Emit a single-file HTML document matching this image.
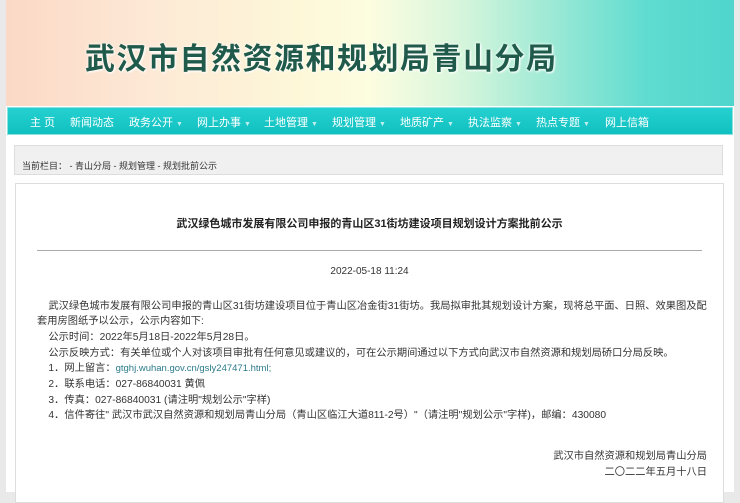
<!DOCTYPE html>
<html><head><meta charset="utf-8"><style>
*{margin:0;padding:0;box-sizing:border-box}
body{width:740px;height:492px;overflow:hidden;background:#e9e9e9;font-family:"Liberation Sans","Noto Sans CJK SC",sans-serif;position:relative}
.wrap{position:absolute;left:6px;top:0;width:728px;height:492px;background:#fff}
.banner{position:absolute;left:0;top:0;width:728px;height:106px;background:linear-gradient(90deg,#fbd9c6 0%,#fde9d6 20%,#fdf7d8 40%,#fdfde0 50%,#d8f6dc 62%,#9ce9d5 75%,#5fdcd0 88%,#4fd5cc 100%)}
.banner h1{position:absolute;left:79px;top:34px;font-size:30px;font-weight:bold;color:#1f5a4a;letter-spacing:1.5px;text-shadow:1px 1px 2px #fff,0 0 3px #fff}
.nav{position:absolute;left:1px;top:107px;width:726px;height:28px;background:linear-gradient(#25d1d0,#10c0c0);border:1px solid #8de0e0}
.nav span{position:absolute;top:6px;font-size:11px;color:#fff;white-space:nowrap}
.nav i{font-style:normal;font-size:7px;color:#bfeeee;margin-left:3px}
.bc{position:absolute;left:8px;top:145px;width:709px;height:30px;background:#f0f0f0;border:1px solid #ddd;font-size:9px;color:#333;padding:13px 0 0 7px}
.box{position:absolute;left:9px;top:183px;width:709px;height:320px;border:1px solid #ddd;background:#fff}
.t{position:absolute;left:0;width:100%;top:31px;text-align:center;font-size:11px;font-weight:bold;color:#222}
.hr{position:absolute;left:21px;width:665px;top:66px;border-top:1px solid #aaa}
.d{position:absolute;left:0;width:100%;top:82px;text-align:center;font-size:10px;color:#333}
.p{position:absolute;left:21px;font-size:10.25px;color:#333;white-space:nowrap}
.r{position:absolute;right:16px;font-size:10.25px;color:#333;text-align:right}
a{color:#2a7a8a;text-decoration:none;font-size:9.5px}
</style></head><body>
<div class="wrap">
<div class="banner"><h1>武汉市自然资源和规划局青山分局</h1></div>
<div class="nav">
<span style="left:22px">主 页</span>
<span style="left:62px">新闻动态</span>
<span style="left:121px">政务公开<i>▼</i></span>
<span style="left:189px">网上办事<i>▼</i></span>
<span style="left:256px">土地管理<i>▼</i></span>
<span style="left:324px">规划管理<i>▼</i></span>
<span style="left:392px">地质矿产<i>▼</i></span>
<span style="left:460px">执法监察<i>▼</i></span>
<span style="left:528px">热点专题<i>▼</i></span>
<span style="left:597px">网上信箱</span>
</div>
<div class="bc">当前栏目： - 青山分局 - 规划管理 - 规划批前公示</div>
<div class="box">
<div class="t">武汉绿色城市发展有限公司申报的青山区31街坊建设项目规划设计方案批前公示</div>
<div class="hr"></div>
<div class="d">2022-05-18 11:24</div>
<div class="p" style="top:113px">&nbsp;&nbsp;&nbsp;&nbsp;武汉绿色城市发展有限公司申报的青山区31街坊建设项目位于青山区冶金街31街坊。我局拟审批其规划设计方案，现将总平面、日照、效果图及配</div>
<div class="p" style="top:128px">套用房图纸予以公示，公示内容如下:</div>
<div class="p" style="top:144px">&nbsp;&nbsp;&nbsp;&nbsp;公示时间：2022年5月18日-2022年5月28日。</div>
<div class="p" style="top:160px">&nbsp;&nbsp;&nbsp;&nbsp;公示反映方式：有关单位或个人对该项目审批有任何意见或建议的，可在公示期间通过以下方式向武汉市自然资源和规划局硚口分局反映。</div>
<div class="p" style="top:175px">&nbsp;&nbsp;&nbsp;&nbsp;1．网上留言：<a>gtghj.wuhan.gov.cn/gsly247471.html;</a></div>
<div class="p" style="top:191px">&nbsp;&nbsp;&nbsp;&nbsp;2．联系电话：027-86840031 黄佩</div>
<div class="p" style="top:207px">&nbsp;&nbsp;&nbsp;&nbsp;3．传真：027-86840031 (请注明"规划公示"字样)</div>
<div class="p" style="top:222px">&nbsp;&nbsp;&nbsp;&nbsp;4．信件寄往" 武汉市武汉自然资源和规划局青山分局（青山区临江大道811-2号）"（请注明"规划公示"字样)，邮编：430080</div>
<div class="r" style="top:263px">武汉市自然资源和规划局青山分局</div>
<div class="r" style="top:279px">二〇二二年五月十八日</div>
</div>
</div>
</body></html>
